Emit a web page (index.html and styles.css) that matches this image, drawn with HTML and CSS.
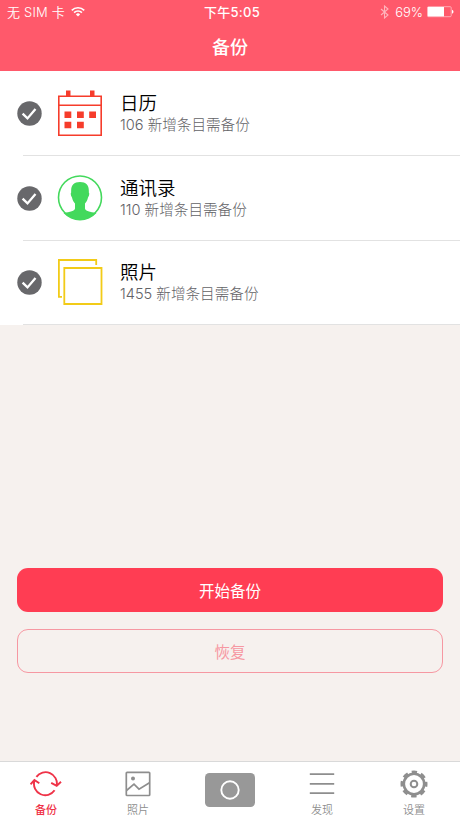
FILE: index.html
```
<!DOCTYPE html>
<html lang="zh-CN">
<head>
<meta charset="utf-8">
<title>备份</title>
<link rel="stylesheet" href="styles.css">
</head>
<body>
<svg width="0" height="0" class="defs">
  <symbol id="check" viewBox="0 0 25 25">
    <circle cx="12.5" cy="12.5" r="12.2" fill="#68686b"/>
    <path d="M5.6 12.6l4.9 4.8 8-9.4" fill="none" stroke="#fff" stroke-width="2.3"/>
  </symbol>
</svg>
<header class="header">
  <div class="status">
    <div class="status-left">
      <span>无 SIM 卡</span>
      <svg width="14" height="11" viewBox="0 0 14 11" fill="none" stroke="#fff" stroke-width="1.7">
        <path d="M.8 4.3a8.8 8.8 0 0 1 12.4 0M3.1 6.6a5.5 5.5 0 0 1 7.8 0"/>
        <path d="M7 10.6L4.9 8.4a3 3 0 0 1 4.2 0z" fill="#fff" stroke="none"/>
      </svg>
    </div>
    <span class="time">下午5:05</span>
    <div class="status-right">
      <svg class="bluetooth" width="9" height="14" viewBox="0 0 9 14" fill="none" stroke="#fff" stroke-width="1.1"><path d="M1 4l7 6-3.5 3V1L8 4l-7 6"/></svg>
      <span>69%</span>
      <svg width="27" height="12" viewBox="0 0 27 12">
        <rect x=".5" y=".7" width="23.7" height="10" rx="1" fill="none" stroke="#fff" stroke-opacity=".6" stroke-width=".8"/>
        <rect x=".8" y="1" width="16.2" height="9.4" fill="#fff"/>
        <path d="M25 3.8c2 .8 2 3.2 0 4z" fill="#fff"/>
      </svg>
    </div>
  </div>
  <h1 class="title">备份</h1>
</header>
<main class="main">
  <ul class="list">
    <li class="row">
      <svg class="check"><use href="#check"/></svg>
      <svg class="icon" viewBox="0 0 46 46">
        <g fill="none" stroke="#f63c2b" stroke-width="1.6"><path d="M1.8 6.3h42.4v39H1.8zM1.8 15.2h42.4"/></g>
        <path d="M9 .5h4.5v6H9zM33 .5h4.5v6H33zM7.500 21.500h6.800v6.500H7.500zM20 21.500h6.800v6.500H20zM32.200 21.500H39v6.500h-6.800zM7.500 31.700h6.800v6.500H7.500zM20 31.700h6.800v6.500H20z" fill="#f63c2b"/>
      </svg>
      <div class="info"><h2>日历</h2><p>106 新增条目需备份</p></div>
    </li>
    <li class="row">
      <svg class="check"><use href="#check"/></svg>
      <svg class="icon" viewBox="0 0 46 46">
        <circle cx="23" cy="22.500" r="21.500" fill="none" stroke="#43d95c" stroke-width="1.600"/>
        <path d="M23 7C29.500 7 32.300 10.500 31.800 17.500C32.600 18.300 32.300 20.700 31 22.500C30.300 25.500 29.500 27 28 28.500V33.500C28 36 33 37 39.500 38A22 22 0 0 1 6.500 38C13 37 18 36 18 33.500V28.500C16.500 27 15.700 25.500 15 22.500C13.700 20.700 13.400 18.300 14.200 17.500C13.700 10.500 16.500 7 23 7z" fill="#43d95c"/>
      </svg>
      <div class="info"><h2>通讯录</h2><p>110 新增条目需备份</p></div>
    </li>
    <li class="row">
      <svg class="check"><use href="#check"/></svg>
      <svg class="icon" viewBox="0 0 46 46" fill="none" stroke="#f2cb18" stroke-width="1.800">
        <path d="M5 37.800H1.900V1h37.300v5M7.300 9h37.200v36H7.300z"/>
      </svg>
      <div class="info"><h2>照片</h2><p>1455 新增条目需备份</p></div>
    </li>
  </ul>
  <div class="actions">
    <button class="btn primary">开始备份</button>
    <button class="btn outline">恢复</button>
  </div>
</main>
<nav class="tabs">
  <a class="tab active">
    <svg width="32" height="28" viewBox="0 0 32 28" fill="none" stroke="currentColor" stroke-width="1.900">
      <path d="M6.400 6.900A11.300 11.300 0 0 1 26.700 15.500M21.200 12.900l5.500 3 4.300-4.200M24.600 20.300A11.300 11.300 0 0 1 4.300 11.200M.5 14.300l3.900-4.300 4.900 3.200"/>
    </svg>
    <span>备份</span>
  </a>
  <a class="tab">
    <svg width="26" height="28" viewBox="0 0 26 28" fill="none" stroke="currentColor" stroke-width="1.700">
      <rect x="1.300" y="2.300" width="23.400" height="23.200" rx=".8"/><path d="M1.500 20.500l7.500-6.300 5 5 10.500-6.500"/><circle cx="8" cy="8.600" r="2" fill="currentColor" stroke="none"/>
    </svg>
    <span>照片</span>
  </a>
  <a class="tab camera">
    <svg width="50" height="34" viewBox="0 0 50 34"><rect width="50" height="34" rx="4.500" fill="#989898"/><circle cx="25" cy="17" r="8.700" fill="none" stroke="#fff" stroke-width="1.900"/></svg>
  </a>
  <a class="tab">
    <svg width="26" height="28" viewBox="0 0 26 28" stroke="currentColor" stroke-width="1.700"><path d="M.8 4.200h24.400M.8 13.800h24.400M.8 23.200h24.400"/></svg>
    <span>发现</span>
  </a>
  <a class="tab">
    <svg width="28" height="28" viewBox="-14 -14 28 28" fill="none" stroke="currentColor">
      <circle r="10.200" stroke-width="2.600"/><circle r="3.300" stroke-width="2"/>
      <circle r="12.200" stroke-width="2.600" stroke-dasharray="5.400 4.182" stroke-dashoffset="2.700"/>
    </svg>
    <span>设置</span>
  </a>
</nav>
</body>
</html>
```
FILE: styles.css
```
* { box-sizing: border-box; }
body {
  margin: 0;
  height: 818px;
  display: flex;
  flex-direction: column;
  overflow: hidden;
  background: #f6f1ee;
  font-family: Inter, "Noto Sans CJK SC", sans-serif;
  color: #000;
}
h1, h2, p, ul { margin: 0; padding: 0; }
.defs { position: absolute; }
.header {
  height: 71px;
  background: #ff596b;
  color: #fff;
}
.status {
  height: 24px;
  padding: 0 7px;
  display: grid;
  grid-template-columns: 1fr auto 1fr;
  align-items: center;
  font-size: 13px;
  font-weight: 350;
  line-height: 24px;
}
.status-left, .status-right { display: flex; align-items: center; }
.status-left { gap: 6px; letter-spacing: .2px; }
.status-left svg { margin-bottom: 1px; }
.status-right { justify-content: flex-end; gap: 4px; margin-right: -1px; }
.bluetooth { opacity: .55; margin-right: 2px; }
.time { font-weight: 500; letter-spacing: .3px; padding-left: 4px; }
.title {
  text-align: center;
  font-size: 18px;
  font-weight: 500;
  line-height: 48px;
}
.main { flex: 1; }
.list { list-style: none; background: #fff; }
.row {
  height: 85px;
  display: flex;
  align-items: center;
  padding: 0 0 2px 17px;
  background: linear-gradient(#e2e2e2, #e2e2e2) right bottom / calc(100% - 23px) 1px no-repeat;
}
.row:last-child { height: 84px; }
.check { width: 25px; height: 25px; margin-top: 1px; }
.icon { width: 46px; height: 46px; margin-left: 15px; }
.info { margin-left: 17px; }
.info h2 { font-size: 18.500px; font-weight: 350; line-height: 24px; }
.info p { font-size: 14.600px; font-weight: 300; line-height: 20px; color: #626266; }
.actions {
  display: flex;
  flex-direction: column;
  gap: 17px;
  padding: 243px 17px 0;
}
.btn {
  height: 44px;
  border: 0;
  border-radius: 11px;
  font: 400 15.500px Inter, "Noto Sans CJK SC", sans-serif;
}
.primary { background: #ff3d53; color: #fff; }
.outline { background: transparent; border: 1px solid #f698a2; color: #f698a2; }
.tabs {
  height: 57px;
  display: grid;
  grid-template-columns: repeat(5, 1fr);
  background: #fff;
  border-top: 1px solid #d9d9d9;
}
.tab {
  display: flex;
  flex-direction: column;
  align-items: center;
  padding-top: 8px;
  color: #8e8e8e;
  font-size: 11px;
  font-weight: 350;
  line-height: 16px;
}
.tab span { margin-top: 4px; }
.active { color: #ef3348; }
.active span { font-weight: 500; }
.camera { padding-top: 11px; }
```
